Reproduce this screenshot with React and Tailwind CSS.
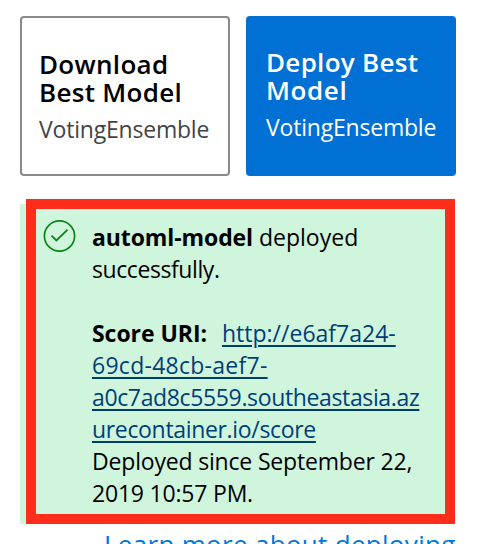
function CheckCircle() {
  return (
    <svg className="h-8 w-8 shrink-0 overflow-visible" viewBox="0 0 32 32" fill="none" stroke="#0b8518">
      <circle cx="16.5" cy="16" r="15.1" strokeWidth="1.7" />
      <path d="M8.5 15.6 L13.4 20.4 L24.6 9.6" strokeWidth="1.8" />
    </svg>
  );
}

export default function App() {
  return (
    <div className="h-[544px] w-[498px] overflow-hidden bg-white pt-4 pl-5 font-['Open_Sans',sans-serif] whitespace-nowrap text-black">
      <div className="flex gap-4">
        <div className="h-40 w-[210px] rounded-[4px] border-2 border-[#8a8a8a] pt-[32px] pl-[17px]">
          <div className="text-[26px] leading-7 font-semibold">
            <div className="tracking-[0.3px]">Download</div>
            <div className="tracking-[0.3px]">Best Model</div>
          </div>
          <div className="mt-[7px] text-[23px] leading-8 tracking-[-0.2px] text-[#444]">VotingEnsemble</div>
        </div>
        <div className="h-40 w-[210px] rounded-[4px] bg-[#0070d4] pt-[32px] pl-5 text-white">
          <div className="text-[26px] leading-7 font-semibold">
            <div className="tracking-[0.3px]">Deploy Best</div>
            <div className="tracking-[0.6px]">Model</div>
          </div>
          <div className="mt-[7px] text-[23px] leading-8 tracking-[-0.2px]">VotingEnsemble</div>
        </div>
      </div>
      <div className="mt-[23px] w-[435px] bg-[linear-gradient(#fff_5px,#d0f5dd_5px)] pl-[6px]">
        <div className="flex h-[325px] border-[10px] border-[#ff2d1a] bg-[#d0f5dd] pt-[11px] pl-[7px]">
          <CheckCircle />
          <div className="ml-[17px] pt-px text-[23px] leading-8">
            <div><b className="tracking-[-0.1px]">automl-model</b><span> deployed</span></div>
            <div className="tracking-[-0.42px]">successfully.</div>
            <div className="h-8" />
            <div className="flex"><b className="tracking-[-0.05px]">Score URI:</b><a className="ml-[15px] text-[#003e78] underline decoration-2 underline-offset-[3px]">http://e6af7a24-</a></div>
            <div className="text-[#003e78] underline decoration-2 underline-offset-[3px]"><span className="tracking-[0.27px]">69cd-48cb-aef7-</span></div>
            <div className="tracking-[-0.36px] text-[#003e78] underline decoration-2 underline-offset-[3px]">a0c7ad8c5559.southeastasia.az</div>
            <div className="tracking-[-0.33px] text-[#003e78] underline decoration-2 underline-offset-[3px]">urecontainer.io/score</div>
            <div className="tracking-[-0.18px]">Deployed since September 22,</div>
            <div className="tracking-[-0.2px]">2019 10:57 PM.</div>
          </div>
        </div>
      </div>
      <div className="mt-[2px] ml-[84px] text-[26px] leading-9 tracking-[0.3px] text-[#0078d7]">Learn more about deploying</div>
    </div>
  );
}
